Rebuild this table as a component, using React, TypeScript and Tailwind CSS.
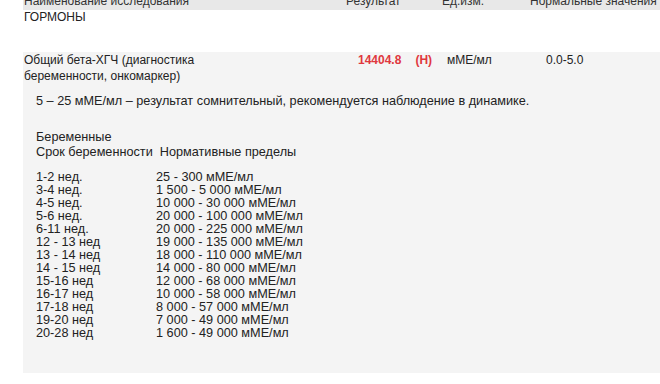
import React from "react";

const rows: [string, string][] = [
  ["1-2 нед.", "25 - 300 мМЕ/мл"],
  ["3-4 нед.", "1 500 - 5 000 мМЕ/мл"],
  ["4-5 нед.", "10 000 - 30 000 мМЕ/мл"],
  ["5-6 нед.", "20 000 - 100 000 мМЕ/мл"],
  ["6-11 нед.", "20 000 - 225 000 мМЕ/мл"],
  ["12 - 13 нед", "19 000 - 135 000 мМЕ/мл"],
  ["13 - 14 нед", "18 000 - 110 000 мМЕ/мл"],
  ["14 - 15 нед", "14 000 - 80 000 мМЕ/мл"],
  ["15-16 нед", "12 000 - 68 000 мМЕ/мл"],
  ["16-17 нед", "10 000 - 58 000 мМЕ/мл"],
  ["17-18 нед", "8 000 - 57 000 мМЕ/мл"],
  ["19-20 нед", "7 000 - 49 000 мМЕ/мл"],
  ["20-28 нед", "1 600 - 49 000 мМЕ/мл"],
];

export default function App() {
  return (
    <div className="w-[660px] h-[384px] overflow-hidden bg-white text-[12px] text-[#222] font-['Liberation_Sans',Arial,sans-serif]">
      <div className="ml-[23px] -mt-[9px] h-[19px] bg-[#e8e8e8] pl-[1px] grid grid-cols-[322px_96px_88px_1fr] items-center leading-[14px] text-[#333]">
        <div>Наименование исследования</div>
        <div>Результат</div>
        <div>Ед.изм.</div>
        <div>Нормальные значения</div>
      </div>
      <div className="ml-[24px] leading-[14px]">ГОРМОНЫ</div>
      <div className="ml-[23px] mt-[28px] bg-[#f4f4f4] pb-[33px]">
        <div className="pl-[1px] grid grid-cols-[322px_96px_88px_1fr] leading-[16px]">
          <div>
            Общий бета-ХГЧ (диагностика
            <br />
            беременности, онкомаркер)
          </div>
          <div className="pl-[12px] font-bold text-[#e0383e] flex gap-[14px] items-start">
            <span>14404.8</span>
            <span>(H)</span>
          </div>
          <div className="pl-[5px]">мМЕ/мл</div>
          <div className="pl-[16px]">0.0-5.0</div>
        </div>
        <div className="text-[12.7px]">
          <div className="pl-[13px] mt-[10px] leading-[14px]">
            5 – 25 мМЕ/мл – результат сомнительный, рекомендуется наблюдение в динамике.
          </div>
          <div className="pl-[13px] mt-[22px] leading-[15px]">
            <div>Беременные</div>
            <div>Срок беременности&nbsp; Нормативные пределы</div>
          </div>
          <div className="pl-[13px] mt-[11px] leading-[13px] grid grid-cols-[120px_1fr]">
            {rows.map(([a, b]) => (
              <React.Fragment key={a}>
                <div>{a}</div>
                <div>{b}</div>
              </React.Fragment>
            ))}
          </div>
        </div>
      </div>
    </div>
  );
}
